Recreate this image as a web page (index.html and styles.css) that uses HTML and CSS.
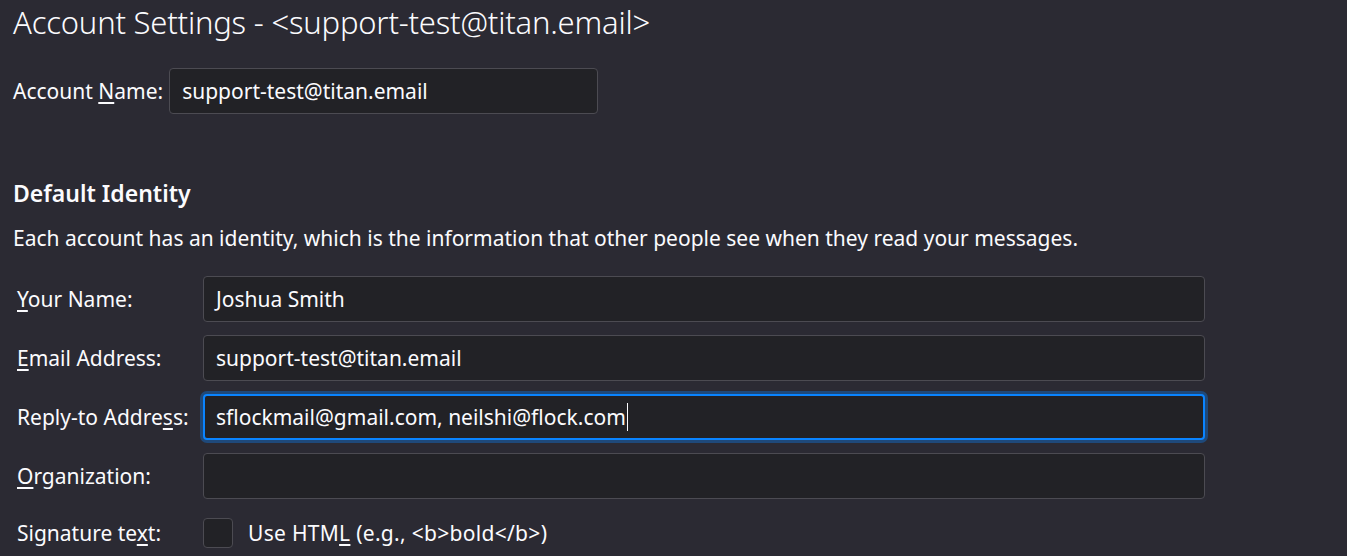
FILE: index.html
```html
<!DOCTYPE html>
<html lang="en">

<head>
    <title>Account Settings</title>
    <link rel="stylesheet" href="styles.css">
</head>

<body>
    <div class="page">
        <h1 class="title">Account Settings - &lt;support-test@titan.email&gt;</h1>

        <div class="account-row">
            <label>Account <u>N</u>ame:</label>
            <div class="field account-field">support-test@titan.email</div>
        </div>

        <h2 class="section-title">Default Identity</h2>
        <p class="section-desc">Each account has an identity, which is the information that other people see when they read your messages.</p>

        <div class="identity-grid">
            <label><u>Y</u>our Name:</label>
            <div class="field">Joshua Smith</div>

            <label><u>E</u>mail Address:</label>
            <div class="field">support-test@titan.email</div>

            <label>Reply-to Addre<u>s</u>s:</label>
            <div class="field focused">sflockmail@gmail.com, neilshi@flock.com<span class="caret"></span></div>

            <label><u>O</u>rganization:</label>
            <div class="field"></div>

            <label class="sig-label">Signature te<u>x</u>t:</label>
            <div class="check-row">
                <span class="checkbox"></span>
                <span>Use HTM<u>L</u> (e.g., &lt;b&gt;bold&lt;/b&gt;)</span>
            </div>
        </div>
    </div>
</body>

</html>
```

FILE: styles.css
```css
body,
html {
    margin: 0;
    padding: 0;
    background: #2b2a33;
    color: #fbfbfe;
    font-family: "Noto Sans", "Open Sans", sans-serif;
    overflow: hidden;
}

.page {
    padding: 0 13px;
}

.title {
    font-size: 31px;
    font-weight: 300;
    margin: 0;
    padding-top: 1px;
    line-height: 42px;
    letter-spacing: -0.2px;
}

.account-row {
    display: flex;
    align-items: center;
    gap: 6px;
    margin-top: 25px;
}

label {
    font-size: 21px;
}

u {
    text-underline-offset: 3px;
}

.field {
    box-sizing: border-box;
    height: 46px;
    background: #222226;
    border: 1px solid #4c4b52;
    border-radius: 4px;
    padding: 0 12px;
    display: flex;
    align-items: center;
    font-size: 21px;
}

.account-field {
    width: 429px;
}

.section-title {
    font-size: 23px;
    font-weight: 600;
    margin: 64px 0 0 0;
    line-height: 30px;
}

.section-desc {
    font-size: 21px;
    margin: 17px 0 0 0;
    line-height: 26px;
}

.identity-grid {
    display: grid;
    grid-template-columns: 186px 1002px;
    row-gap: 13px;
    align-items: center;
    margin-top: 25px;
    padding-left: 4px;
}

.field.focused {
    border: 2px solid #0a84ff;
    padding-left: 11px;
    box-shadow: 0 0 0 3px rgba(10, 132, 255, 0.35);
}

.caret {
    display: inline-block;
    width: 1px;
    height: 28px;
    background: #fbfbfe;
    margin-left: 1px;
}

.sig-label,
.check-row {
    margin-top: 6px;
}

.check-row {
    display: flex;
    align-items: center;
    gap: 15px;
    font-size: 21px;
    letter-spacing: 0.3px;
}

.checkbox {
    box-sizing: border-box;
    width: 30px;
    height: 30px;
    background: #222226;
    border: 1px solid #4c4b52;
    border-radius: 4px;
}
```
